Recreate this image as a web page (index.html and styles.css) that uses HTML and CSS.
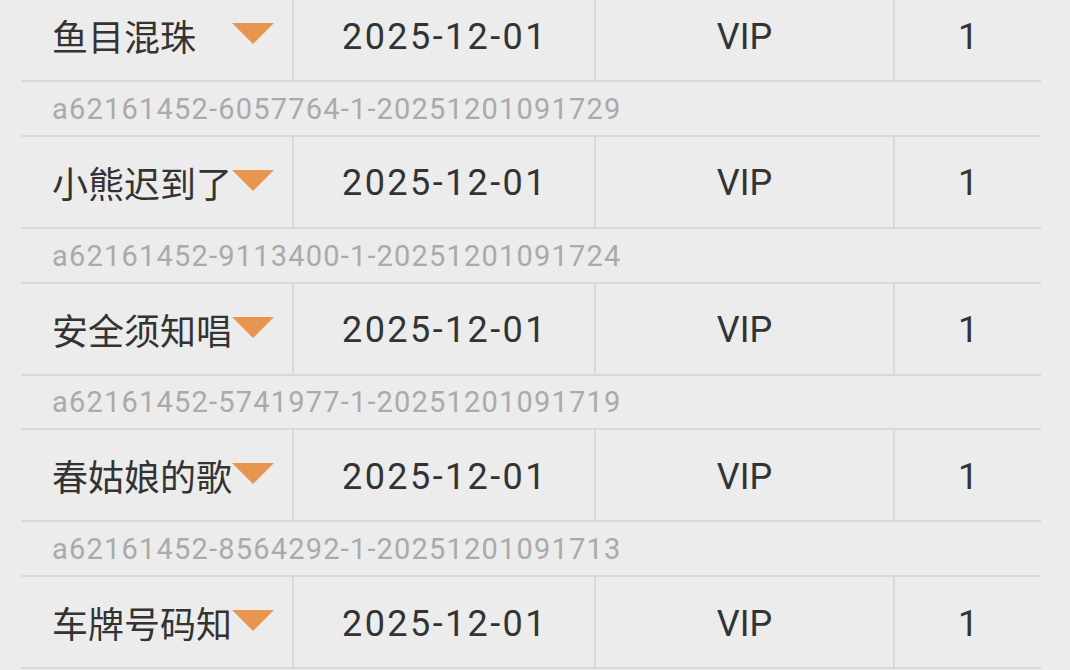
FILE: index.html
```html
<!DOCTYPE html>
<html lang="zh">
<head>
<meta charset="utf-8">
<link rel="stylesheet" href="styles.css">
</head>
<body>
<div class="list">
  <div class="record">
    <div class="main">
      <div class="cell name"><span>鱼目混珠</span><i class="tri"></i></div>
      <div class="cell num">2025-12-01</div>
      <div class="cell num">VIP</div>
      <div class="cell num">1</div>
    </div>
    <div class="sub">a62161452-6057764-1-20251201091729</div>
  </div>
  <div class="record">
    <div class="main">
      <div class="cell name"><span>小熊迟到了</span><i class="tri"></i></div>
      <div class="cell num">2025-12-01</div>
      <div class="cell num">VIP</div>
      <div class="cell num">1</div>
    </div>
    <div class="sub">a62161452-9113400-1-20251201091724</div>
  </div>
  <div class="record">
    <div class="main">
      <div class="cell name"><span>安全须知唱</span><i class="tri"></i></div>
      <div class="cell num">2025-12-01</div>
      <div class="cell num">VIP</div>
      <div class="cell num">1</div>
    </div>
    <div class="sub">a62161452-5741977-1-20251201091719</div>
  </div>
  <div class="record">
    <div class="main">
      <div class="cell name"><span>春姑娘的歌</span><i class="tri"></i></div>
      <div class="cell num">2025-12-01</div>
      <div class="cell num">VIP</div>
      <div class="cell num">1</div>
    </div>
    <div class="sub">a62161452-8564292-1-20251201091713</div>
  </div>
  <div class="record">
    <div class="main">
      <div class="cell name"><span>车牌号码知</span><i class="tri"></i></div>
      <div class="cell num">2025-12-01</div>
      <div class="cell num">VIP</div>
      <div class="cell num">1</div>
    </div>
  </div>
</div>
</body>
</html>
```

FILE: styles.css
```css
html, body {
  margin: 0;
  padding: 0;
  background: #ececec;
  overflow: hidden;
}
body {
  width: 1070px;
  height: 670px;
  font-family: Roboto, "Noto Sans CJK SC", sans-serif;
  color: #333333;
}
.list {
  margin: -10px 29px 0 21px;
}
.main {
  display: grid;
  grid-template-columns: 271px 302px 299px 1fr;
  height: 90px;
  border-bottom: 2px solid #d9d9d9;
}
.cell {
  display: flex;
  align-items: center;
  justify-content: center;
  font-size: 36px;
  border-left: 2px solid #d9d9d9;
}
.cell:first-child {
  border-left: none;
}
.cell.num {
  padding-top: 3px;
}
.cell.num:nth-child(2) {
  letter-spacing: 2.4px;
  padding-left: 2px;
}
.cell.name {
  position: relative;
  justify-content: flex-start;
  padding-left: 31px;
  font-family: "Noto Sans CJK SC", sans-serif;
  white-space: nowrap;
}
.tri {
  position: absolute;
  right: 18px;
  top: 33px;
  width: 0;
  height: 0;
  border-left: 21px solid transparent;
  border-right: 21px solid transparent;
  border-top: 21px solid #e8964f;
}
.sub {
  height: 52.75px;
  border-bottom: 2px solid #d9d9d9;
  padding-left: 31px;
  padding-top: 1px;
  box-sizing: border-box;
  height: 54.75px;
  display: flex;
  align-items: center;
  font-size: 29px;
  letter-spacing: 1.2px;
  color: #aaaaaa;
}
```
